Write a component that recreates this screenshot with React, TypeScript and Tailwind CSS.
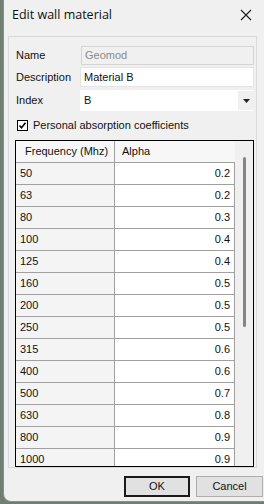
const rows: [string, string][] = [
	['50', '0.2'],
	['63', '0.2'],
	['80', '0.3'],
	['100', '0.4'],
	['125', '0.4'],
	['160', '0.5'],
	['200', '0.5'],
	['250', '0.5'],
	['315', '0.6'],
	['400', '0.6'],
	['500', '0.7'],
	['630', '0.8'],
	['800', '0.9'],
	['1000', '0.9'],
];

const CheckBox = () => (
	<div className="w-[11px] h-[11px] border border-black bg-white flex items-center justify-center">
		<svg width="9" height="9" viewBox="0 0 9 9" aria-hidden="true">
			<path d="M1.5 4.5l2 2.2 4-5" fill="none" stroke="black" strokeWidth={1.6} />
		</svg>
	</div>
);

export default function App() {
	return (
		<div
			className="w-[264px] h-[504px] flex bg-[#6f7f73] overflow-hidden text-[11px] text-[#111]"
			style={{ fontFamily: '"Liberation Sans", Arial, sans-serif' }}
		>
			<div className="ml-[3px] w-[264px] h-[502px] bg-[#f0f0f0] border-l border-b border-[#8c8c8c] rounded-bl-[8px] flex flex-col">
				{/* title bar */}
				<div className="h-[36px] flex items-start justify-between pl-[8px] pt-[6px] pr-[9px]">
					<span className="text-[12.5px] leading-[18px]" style={{ fontFamily: '"Open Sans", "Liberation Sans", sans-serif' }}>
						Edit wall material
					</span>
					<svg width="12" height="12" viewBox="0 0 12 12" className="mt-[3px] mr-[3px]" aria-hidden="true">
						<path d="M1 1l10 10M11 1L1 11" stroke="#1a1a1a" strokeWidth={1.1} />
					</svg>
				</div>

				{/* group panel */}
				<div className="ml-[4px] w-[249px] h-[432px] border border-[#d9d9d9] flex flex-col pt-[8px] pl-[6px] pr-[2px]">
					<div className="flex items-center h-[20px]">
						<span className="w-[66px] pl-[1px]">Name</span>
						<div className="flex-1 h-[19px] bg-[#f0f0f0] border border-[#d4d4d4] px-[3px] flex items-center text-[#8a8a8a]">
							Geomod
						</div>
					</div>
					<div className="flex items-center h-[20px] mt-[2px]">
						<span className="w-[65px] pl-[1px]">Description</span>
						<div className="flex-1 h-[20px] bg-white border border-[#e4e4e4] px-[3px] flex items-center">Material B</div>
					</div>
					<div className="flex items-center h-[21px] mt-[3px]">
						<span className="w-[65px] pl-[1px]">Index</span>
						<div className="flex-1 h-[21px] bg-white flex items-center">
							<span className="flex-1 px-[4px]">B</span>
							<div className="w-[16px] h-[19px] bg-[#f0f0f0] flex items-center justify-center">
								<svg width="7" height="4" viewBox="0 0 7 4" aria-hidden="true">
									<path d="M0 0h7L3.5 4z" fill="#222" />
								</svg>
							</div>
						</div>
					</div>
					<div className="flex items-center gap-[5px] h-[20px] mt-[4px] pl-[2px]">
						<CheckBox />
						<span>Personal absorption coefficients</span>
					</div>

					{/* grid */}
					<div className="mt-[5px] w-[239px] h-[327px] border border-black flex overflow-hidden">
						<div className="w-[219px] flex flex-col">
							<div className="flex h-[22px] shrink-0 border-b border-[#a0a0a0] bg-[#f7f7f7]">
								<div className="w-[99px] border-r border-[#a0a0a0] pl-[9px] flex items-center">Frequency (Mhz)</div>
								<div className="flex-1 pl-[7px] flex items-center">Alpha</div>
							</div>
							{rows.map(([f, a]) => (
								<div key={f} className="flex h-[22px] shrink-0 border-b border-[#a0a0a0]">
									<div className="w-[99px] border-r border-[#a0a0a0] bg-[#f4f4f4] pl-[4px] flex items-center">{f}</div>
									<div className="flex-1 bg-white border-r border-[#a0a0a0] pr-[4px] flex items-center justify-end">{a}</div>
								</div>
							))}
						</div>
						<div className="flex-1 bg-[#f0f0f0] flex justify-center pt-[16px]">
							<div className="w-[3px] h-[170px] rounded-full bg-[#858585]" />
						</div>
					</div>
				</div>

				{/* buttons */}
				<div className="flex mt-[8px] pl-[120px] gap-[6px]">
					<button className="w-[66px] h-[21px] border-2 border-[#1a1a1a] bg-[#e1e1e1] flex items-center justify-center">OK</button>
					<button className="w-[67px] h-[21px] border border-[#adadad] bg-[#e1e1e1] flex items-center justify-center">Cancel</button>
				</div>
			</div>
		</div>
	);
}
